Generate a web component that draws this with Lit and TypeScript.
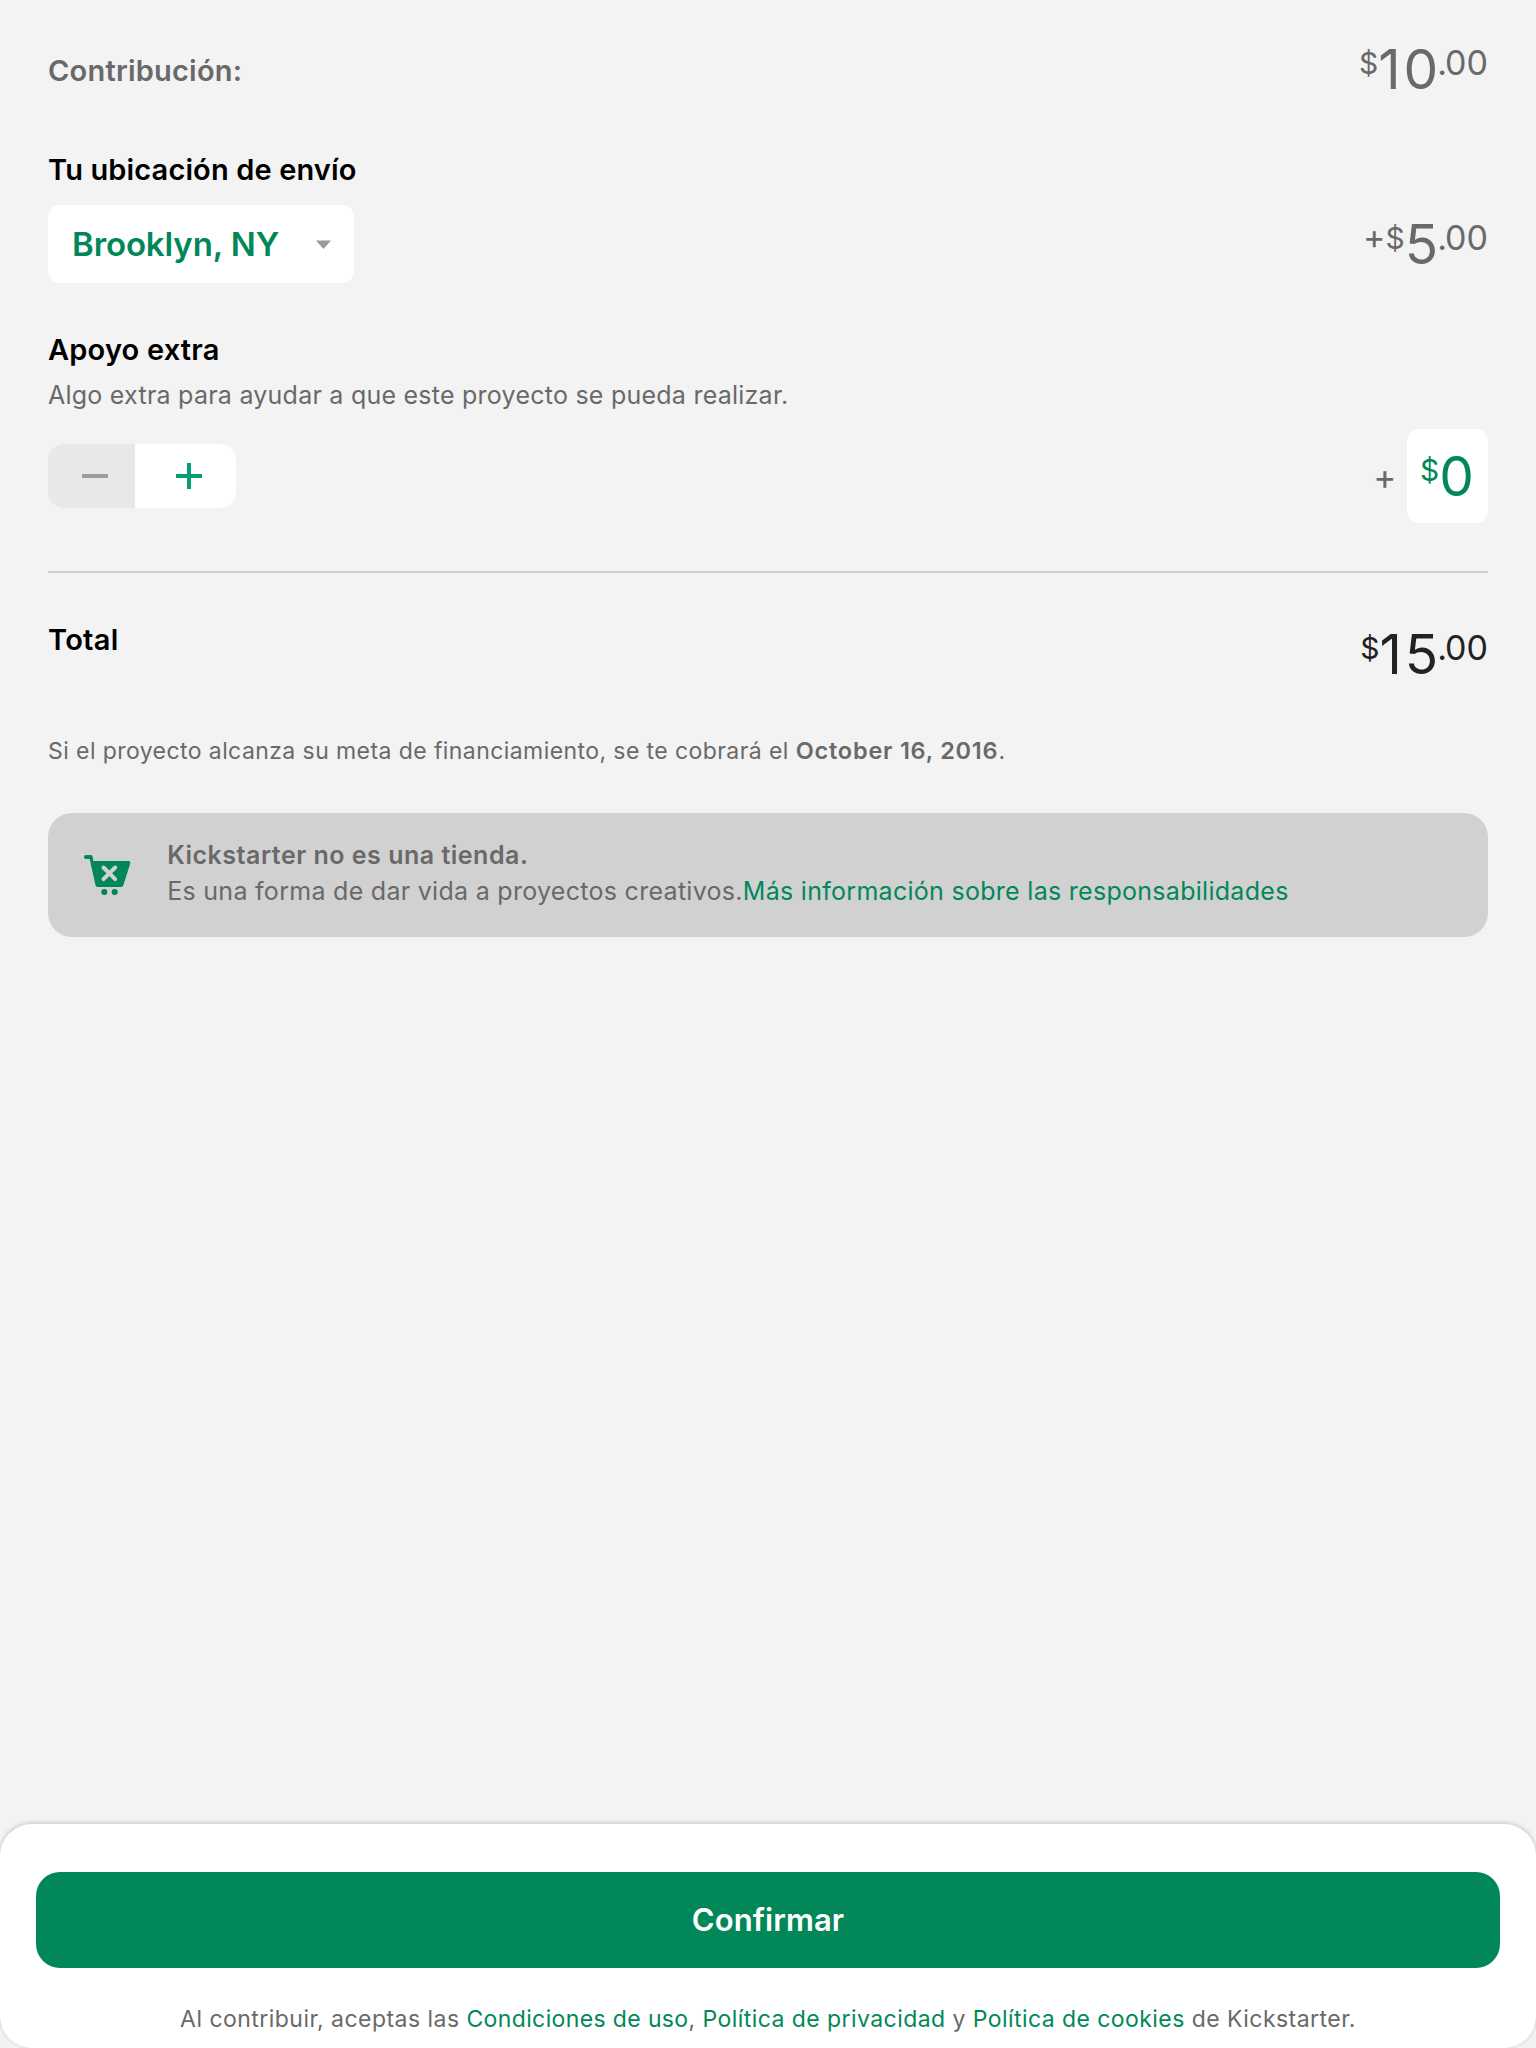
import { LitElement, html, svg, css } from 'lit';
import { customElement, property } from 'lit/decorators.js';

@customElement('price-tag')
class PriceTag extends LitElement {
  @property() sign = '';
  @property() whole = '0';
  @property() cents = '';

  static styles = css`
    :host { display: flex; align-items: flex-start; font-family: Inter, sans-serif; line-height: 1; white-space: nowrap; }
    .plus { font-size: 34px; margin-top: 3px; }
    .currency { font-size: 30px; margin-top: 6px; }
    .whole { font-size: 55px; letter-spacing: 3px; margin-right: -4px; }
    .dot, .cents { font-size: 34px; margin-top: 4px; }
    .dot { letter-spacing: -2px; }
  `;

  render() {
    return html`
      ${this.sign ? html`<span class="plus">${this.sign}</span>` : ''}
      <span class="currency">$</span><span class="whole">${this.whole}</span>
      ${this.cents ? html`<span class="dot">.</span><span class="cents">${this.cents}</span>` : ''}
    `;
  }
}

const cartIcon = svg`
  <path fill="#028858" d="M6 0H20Q25 0 26 5L28 18H134Q140 18 139 25L118 91Q116 96 111 96H41Q36 96 34.500 91L17 12H6A6 6 0 0 1 6 0Z"/>
  <path stroke="#d1d1d1" stroke-width="12" stroke-linecap="round" d="M58.500 37.500L93.500 72.500M93.500 37.500L58.500 72.500"/>
  <circle fill="#028858" cx="61" cy="111" r="9.300"/>
  <circle fill="#028858" cx="92" cy="111" r="9.300"/>`;

@customElement('app-root')
class AppRoot extends LitElement {
  static styles = css`
    :host {
      display: flex; flex-direction: column; width: 1536px; height: 2048px;
      box-sizing: border-box; overflow: hidden; background: #f3f3f3; color: #696969;
      font-family: Inter, "Liberation Sans", sans-serif;
    }
    main { flex: 1; padding: 0 48px; }
    p, h2 { margin: 0; white-space: nowrap; }
    a { color: #028858; text-decoration: none; }
    .row { display: flex; justify-content: space-between; align-items: flex-start; }
    .label { font-size: 29px; font-weight: 600; line-height: 36px; color: #000; letter-spacing: 0.130px; }
    .pledge { height: 110px; padding-top: 42px; }
    .pledge .label { margin-top: 11px; color: #696969; letter-spacing: 0.220px; }
    .shipping { height: 180px; }
    .shipping price-tag { margin-top: 65px; }
    .location {
      display: flex; align-items: center; justify-content: space-between; box-sizing: border-box;
      width: 306px; height: 78px; margin-top: 17px; padding: 0 23px 0 24px; border-radius: 12px; background: #fff;
      color: #028858; font-size: 33px; font-weight: 600; letter-spacing: -0.110px; white-space: nowrap;
    }
    .caret { width: 15px; height: 9px; display: block; }
    .extra .label { letter-spacing: 0.190px; }
    .hint { font-size: 25px; line-height: 30px; margin-top: 12px; letter-spacing: 0.240px; }
    .bonus { margin-top: 19px; height: 142px; }
    .stepper { display: flex; width: 188px; height: 64px; margin-top: 15px; border-radius: 16px; overflow: hidden; }
    .minus { width: 87px; background: #e8e8e8; display: flex; align-items: center; padding-left: 34px; box-sizing: border-box; }
    .more { flex: 1; background: #fff; display: flex; align-items: center; padding-left: 41px; }
    .amount { display: flex; align-items: center; }
    .sign { font-size: 35px; line-height: 40px; margin-right: 10.500px; }
    .field {
      width: 81px; height: 94px; box-sizing: border-box; padding: 20px 0 0 13px;
      border-radius: 12px; background: #fff; color: #028858;
    }
    .divider { height: 2px; background: #d0d0d0; }
    .total { height: 163px; }
    .total .label { margin-top: 49px; letter-spacing: 0.270px; }
    .total price-tag { margin-top: 54px; color: #222; }
    .note { font-size: 23px; line-height: 30px; letter-spacing: 0.418px; }
    .note b { font-size: 23.500px; font-weight: 600; letter-spacing: 0.780px; }
    .notice {
      display: flex; height: 124px; box-sizing: border-box; margin-top: 47px; padding: 24px 36px;
      border-radius: 24px; background: #d1d1d1; font-size: 25px; line-height: 36px;
    }
    .cart { width: 46.670px; height: 40px; margin: 18px 36.500px 0 0; flex: none; }
    .notice b { font-weight: 600; letter-spacing: 0.510px; }
    .notice p { letter-spacing: 0.288px; }
    .cta {
      height: 224px; box-sizing: border-box; padding: 48px 36px 0; border-radius: 32px;
      background: #fff; box-shadow: 0 -1px 5px rgba(0, 0, 0, 0.200);
    }
    .confirm {
      display: flex; align-items: center; justify-content: center; width: 100%; height: 96px; box-sizing: border-box;
      padding: 0 0 2px; border: 0; border-radius: 24px; background: #028858; color: #fff;
      font: 600 31px Inter, sans-serif; letter-spacing: 0.080px;
    }
    .terms { margin-top: 36px; text-align: center; font-size: 23px; line-height: 30px; letter-spacing: 0.460px; }
    .terms a { letter-spacing: 0.430px; }
    .terms .use { letter-spacing: 0.370px; }
  `;

  render() {
    return html`
      <main>
        <div class="row pledge">
          <h2 class="label">Contribución:</h2>
          <price-tag whole="10" cents="00"></price-tag>
        </div>
        <div class="row shipping">
          <div>
            <h2 class="label">Tu ubicación de envío</h2>
            <div class="location">
              <span>Brooklyn, NY</span>
              <svg class="caret" viewBox="0 0 15 9"><path fill="#999c9c" d="M0 .5H15L7.500 9Z"/></svg>
            </div>
          </div>
          <price-tag sign="+" whole="5" cents="00"></price-tag>
        </div>
        <div class="extra">
          <h2 class="label">Apoyo extra</h2>
          <p class="hint">Algo extra para ayudar a que este proyecto se pueda realizar.</p>
        </div>
        <div class="row bonus">
          <div class="stepper">
            <div class="minus"><svg width="26" height="26" viewBox="0 0 26 26"><path fill="#999e9e" d="M0 11H26V15H0Z"/></svg></div>
            <div class="more"><svg width="26" height="26" viewBox="0 0 26 26"><path fill="#039e74" d="M11 0H15V11H26V15H15V26H11V15H0V11H11Z"/></svg></div>
          </div>
          <div class="amount">
            <span class="sign">+</span>
            <div class="field"><price-tag whole="0"></price-tag></div>
          </div>
        </div>
        <div class="divider"></div>
        <div class="row total">
          <h2 class="label">Total</h2>
          <price-tag whole="15" cents="00"></price-tag>
        </div>
        <p class="note">Si el proyecto alcanza su meta de financiamiento, se te cobrará el <b>October 16, 2016</b>.</p>
        <div class="notice">
          <svg class="cart" viewBox="0 0 140 120" fill="none">${cartIcon}</svg>
          <div>
            <b>Kickstarter no es una tienda.</b>
            <p>Es una forma de dar vida a proyectos creativos.<a>Más información sobre las responsabilidades</a></p>
          </div>
        </div>
      </main>
      <div class="cta">
        <button class="confirm">Confirmar</button>
        <p class="terms">Al contribuir, aceptas las <a class="use">Condiciones de uso</a>, <a>Política de privacidad</a> y <a>Política de cookies</a> de Kickstarter.</p>
      </div>
    `;
  }
}
